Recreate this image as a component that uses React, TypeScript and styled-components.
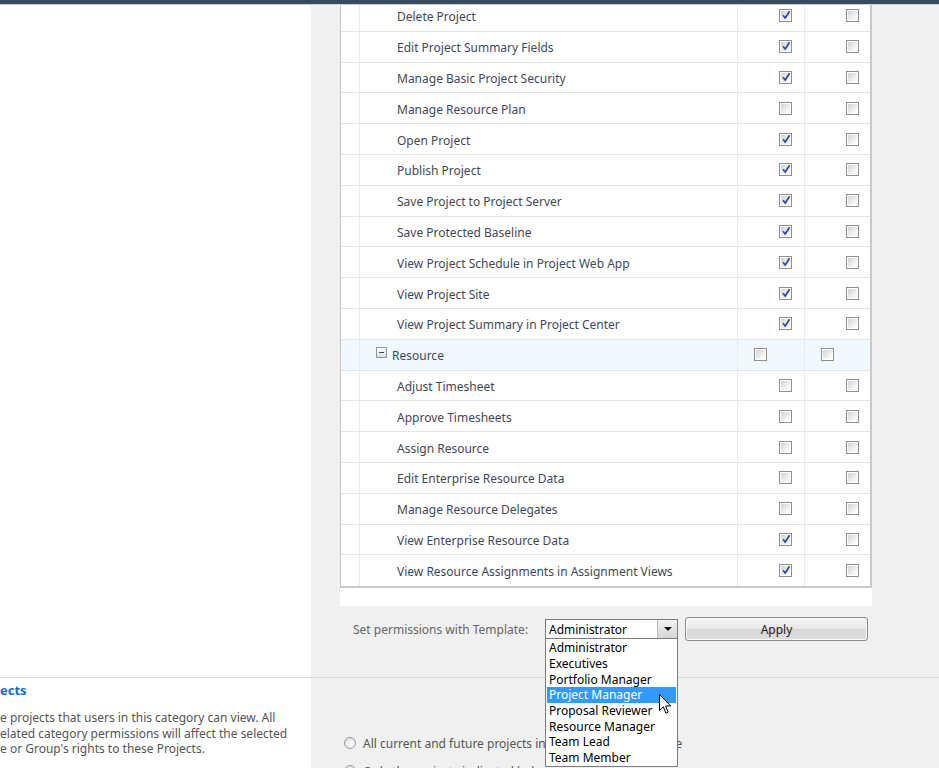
import React from 'react'
import styled, { createGlobalStyle } from 'styled-components'

const GlobalStyle = createGlobalStyle`
    html, body {
        margin: 0;
        padding: 0;
        background: #fff;
        overflow: hidden;
    }
    body {
        font-family: "Noto Sans", "Liberation Sans", sans-serif;
        font-size: 12px;
    }
`

const TopBar = styled.div`
    position: fixed;
    top: 0;
    left: 0;
    right: 0;
    height: 4px;
    background: #3a4a5d;
    border-bottom: 1px solid #c6d4e0;
    z-index: 5;
`

const Page = styled.div`
    display: flex;
    flex-direction: column;
    width: 939px;
    height: 768px;
`

const Section = styled.div<{ $height?: number; $divider?: boolean }>`
    display: flex;
    flex-shrink: 0;
    height: ${p => (p.$height ? `${p.$height}px` : 'auto')};
    flex: ${p => (p.$height ? 'none' : '1')};
    border-bottom: ${p => (p.$divider ? '1px solid #d9d9d9' : 'none')};
`

const LeftCol = styled.div`
    width: 311px;
    flex-shrink: 0;
    background: #fff;
`

const RightCol = styled.div<{ $pad: number }>`
    flex: 1;
    background: #f0f0f0;
    padding-left: ${p => p.$pad}px;
`

const Panel = styled.div`
    width: 532px;
    background: #fff;
    padding-top: 1px;
    padding-bottom: 18px;
`

const Table = styled.div`
    border-left: 1px solid #c4c4c4;
    border-right: 2px solid #cacaca;
    border-bottom: 2px solid #cacaca;
`

const Row = styled.div<{ $group?: boolean }>`
    display: grid;
    grid-template-columns: 19px 378px 67px 67px;
    height: 30.8px;
    box-sizing: border-box;
    border-bottom: 1px solid #e6e6e6;
    background: ${p => (p.$group ? '#f2f9fe' : '#fff')};
    &:last-child {
        border-bottom: none;
    }
`

const Cell = styled.div`
    display: flex;
    align-items: center;
    border-right: 1px solid #ebebeb;
    &:last-child {
        border-right: none;
    }
`

const NameCell = styled(Cell)<{ $group?: boolean }>`
    padding-left: ${p => (p.$group ? '16px' : '37px')};
    padding-top: 2px;
    color: #3f4859;
    white-space: nowrap;
    gap: 5px;
`

const CheckCell = styled(Cell)<{ $group?: boolean; $pad: number }>`
    justify-content: ${p => (p.$group ? 'flex-start' : 'flex-end')};
    padding: ${p => (p.$group ? '0 0 0 16px' : `0 ${p.$pad}px 0 0`)};
`

const Box = styled.span`
    position: relative;
    width: 13px;
    height: 13px;
    box-sizing: border-box;
    border: 1px solid #8e8e8e;
    background: #fff;
    display: inline-block;
    &::before {
        content: '';
        position: absolute;
        inset: 1px;
        background: linear-gradient(135deg, #d2d2d2 0%, #f4f4f4 70%, #fff 100%);
    }
    svg {
        position: absolute;
        left: 1px;
        top: 0px;
    }
`

const Toggle = styled.span`
    width: 11px;
    height: 11px;
    box-sizing: border-box;
    border: 1px solid #8d96a3;
    background: linear-gradient(180deg, #fdfdfd, #d9dee4);
    display: inline-flex;
    align-items: center;
    justify-content: center;
    margin-top: -6px;
    &::after {
        content: '';
        width: 5px;
        height: 1px;
        background: #3a4556;
    }
`

const TemplateRow = styled.div`
    display: flex;
    align-items: center;
    height: 24px;
    margin-top: 11px;
    padding-left: 13px;
`

const Label = styled.span`
    width: 192px;
    color: #666;
    padding-top: 1px;
`

const SelectWrap = styled.div`
    position: relative;
    width: 133px;
    height: 20px;
    margin-right: 7px;
`

const SelectBox = styled.div`
    display: flex;
    height: 20px;
    box-sizing: border-box;
    border: 1px solid #7c7c7c;
    background: #fff;
    color: #000;
    align-items: center;
`

const SelectText = styled.span`
    flex: 1;
    padding-left: 3px;
    padding-top: 1px;
`

const ArrowBtn = styled.span`
    width: 20px;
    height: 18px;
    box-sizing: border-box;
    border-left: 1px solid #b8b8b8;
    background: linear-gradient(180deg, #f2f2f2, #d6d6d6);
    display: flex;
    align-items: center;
    justify-content: center;
    &::after {
        content: '';
        border-left: 4px solid transparent;
        border-right: 4px solid transparent;
        border-top: 4px solid #111;
    }
`

const List = styled.div`
    position: absolute;
    top: 19px;
    left: 0;
    width: 133px;
    box-sizing: border-box;
    border: 1px solid #7c7c7c;
    background: #fff;
    padding-top: 1px;
    z-index: 3;
`

const Option = styled.div<{ $active?: boolean }>`
    height: 15.7px;
    line-height: 15.7px;
    margin: 0 1px;
    padding-left: 2px;
    color: ${p => (p.$active ? '#fff' : '#000')};
    background: ${p => (p.$active ? '#3399ff' : 'transparent')};
`

const Cursor = styled.svg`
    position: absolute;
    left: 113px;
    top: 55px;
`

const ApplyButton = styled.button`
    width: 183px;
    height: 24px;
    box-sizing: border-box;
    border: 1px solid #8a8a8a;
    border-radius: 3px;
    background: linear-gradient(180deg, #f5f5f5 0%, #e8e8e8 50%, #d6d6d6 51%, #dedede 100%);
    box-shadow: inset 0 0 0 1px #fbfbfb;
    font-family: inherit;
    font-size: 12px;
    color: #1a1a1a;
    padding: 0;
`

const Heading = styled.div`
    color: #0f6fc6;
    font-weight: bold;
    font-size: 13px;
    margin-top: 3px;
`

const Description = styled.p`
    margin: 11px 0 0;
    color: #555;
    line-height: 15.6px;
    white-space: nowrap;
`

const RadioRow = styled.div`
    display: flex;
    align-items: center;
    gap: 7px;
    color: #555;
    height: 16px;
    white-space: nowrap;
`

const RadioList = styled.div`
    display: flex;
    flex-direction: column;
    gap: 12px;
    padding-top: 57px;
`

const Radio = styled.span`
    width: 12px;
    height: 12px;
    box-sizing: border-box;
    border-radius: 50%;
    border: 1px solid #9a9a9a;
    background: radial-gradient(circle at 60% 65%, #fff 0%, #e6e6e6 60%, #cfcfcf 100%);
    flex-shrink: 0;
`

type Perm = { name: string; allow?: boolean; group?: boolean }

const perms: Perm[] = [
    { name: 'Delete Project', allow: true },
    { name: 'Edit Project Summary Fields', allow: true },
    { name: 'Manage Basic Project Security', allow: true },
    { name: 'Manage Resource Plan' },
    { name: 'Open Project', allow: true },
    { name: 'Publish Project', allow: true },
    { name: 'Save Project to Project Server', allow: true },
    { name: 'Save Protected Baseline', allow: true },
    { name: 'View Project Schedule in Project Web App', allow: true },
    { name: 'View Project Site', allow: true },
    { name: 'View Project Summary in Project Center', allow: true },
    { name: 'Resource', group: true },
    { name: 'Adjust Timesheet' },
    { name: 'Approve Timesheets' },
    { name: 'Assign Resource' },
    { name: 'Edit Enterprise Resource Data' },
    { name: 'Manage Resource Delegates' },
    { name: 'View Enterprise Resource Data', allow: true },
    { name: 'View Resource Assignments in Assignment Views', allow: true },
]

const templates = [
    'Administrator',
    'Executives',
    'Portfolio Manager',
    'Project Manager',
    'Proposal Reviewer',
    'Resource Manager',
    'Team Lead',
    'Team Member',
]

function CheckBox({ checked }: { checked?: boolean }) {
    return (
        <Box>
            {checked && (
                <svg width="10" height="10" viewBox="0 0 10 10">
                    <path d="M2 5.2 L4.2 8 L8.6 1.2" fill="none" stroke="#2a4aa8" strokeWidth="1.7" />
                </svg>
            )}
        </Box>
    )
}

function PermRow({ perm }: { perm: Perm }) {
    return (
        <Row $group={perm.group}>
            <Cell />
            <NameCell $group={perm.group}>
                {perm.group && <Toggle />}
                {perm.name}
            </NameCell>
            <CheckCell $group={perm.group} $pad={12}>
                <CheckBox checked={perm.allow} />
            </CheckCell>
            <CheckCell $group={perm.group} $pad={13}>
                <CheckBox />
            </CheckCell>
        </Row>
    )
}

function App() {
    return (
        <>
            <GlobalStyle />
            <TopBar />
            <Page>
                <Section $height={677} $divider>
                    <LeftCol />
                    <RightCol $pad={29}>
                        <Panel>
                            <Table>
                                {perms.map(p => (
                                    <PermRow key={p.name} perm={p} />
                                ))}
                            </Table>
                        </Panel>
                        <TemplateRow>
                            <Label>Set permissions with Template:</Label>
                            <SelectWrap>
                                <SelectBox>
                                    <SelectText>Administrator</SelectText>
                                    <ArrowBtn />
                                </SelectBox>
                                <List>
                                    {templates.map(t => (
                                        <Option key={t} $active={t === 'Project Manager'}>{t}</Option>
                                    ))}
                                    <Cursor width="13" height="21" viewBox="0 0 13 21">
                                        <path
                                            d="M0.5 0.5 L0.5 16.5 L4.3 12.8 L6.9 19.2 L9.2 18.2 L6.6 12 L11.8 12 Z"
                                            fill="#fff"
                                            stroke="#000"
                                            strokeWidth="1"
                                            strokeLinejoin="round"
                                        />
                                    </Cursor>
                                </List>
                            </SelectWrap>
                            <ApplyButton>Apply</ApplyButton>
                        </TemplateRow>
                    </RightCol>
                </Section>
                <Section>
                    <LeftCol>
                        <Heading>ects</Heading>
                        <Description>
                            e projects that users in this category can view. All
                            <br />
                            elated category permissions will affect the selected
                            <br />
                            e or Group's rights to these Projects.
                        </Description>
                    </LeftCol>
                    <RightCol $pad={33}>
                        <RadioList>
                            <RadioRow>
                                <Radio />
                                All current and future projects in Project Server database
                            </RadioRow>
                            <RadioRow>
                                <Radio />
                                Only the projects indicated below:
                            </RadioRow>
                        </RadioList>
                    </RightCol>
                </Section>
            </Page>
        </>
    )
}

export default App
